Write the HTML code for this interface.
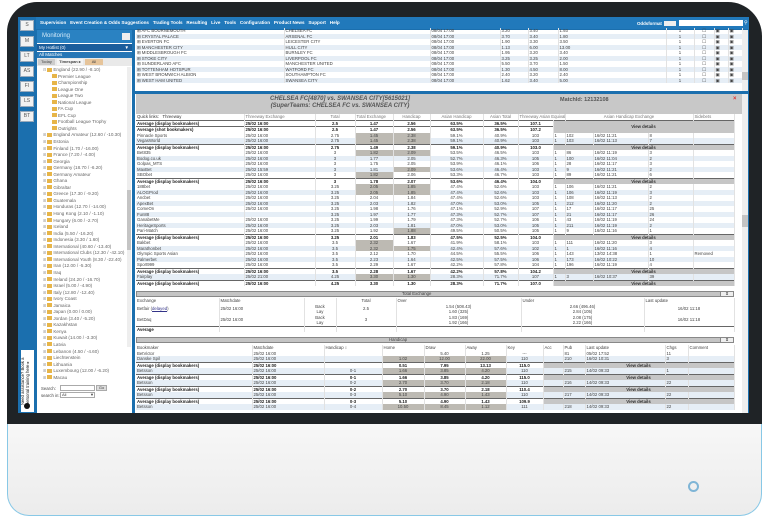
<!DOCTYPE html>
<html><head><meta charset="utf-8">
<style>
*{margin:0;padding:0;box-sizing:border-box}
body{width:768px;height:519px;background:#fff;position:relative;overflow:hidden;font-family:"Liberation Sans",sans-serif;color:#444}
.abs{position:absolute}
#bezel{left:7px;top:2px;width:755px;height:426px;background:#1f2326;border-radius:30px 34px 0 0}
#chin{left:7px;top:424px;width:755px;height:92px;background:linear-gradient(#f7f7f7,#ececec);border:1px solid #88c8e6;border-top:none;border-radius:0 0 22px 22px}
#pwr{left:688px;top:481px;width:11px;height:11px;border-radius:50%;border:2px solid #7fb5d6}
#screen{left:18px;top:17px;width:731px;height:396px;background:#1b6fae}
#menu{left:36px;top:17px;width:713px;height:12px;background:#2179bb;color:#fff;font-size:4.6px;font-weight:bold;line-height:12px;padding-left:4px;white-space:nowrap}
.side{left:20px;width:14px;height:11px;background:#f2f2f2;border:1px solid #9ab;font-size:5px;line-height:9px;text-align:center;color:#555}
#lp{left:37px;top:30px;width:95px;height:383px;background:#fff}
#main{left:135px;top:30px;width:613px;height:383px;background:#fff}
table{border-collapse:collapse;table-layout:fixed}
td{font-size:4.3px;white-space:nowrap;overflow:hidden;padding:0 1px;line-height:5.5px;height:5.5px}
.tr td{border-right:1px solid #e2e2e2}
.b td{font-weight:bold;color:#222;border-top:1px solid #666}
.alt td{background:#e6eef6}
td.g{background:#bdbab3 !important}
td.vd{background:#c6c6c6 !important;text-align:center;font-weight:bold;color:#333}
.c{text-align:center}
.tree div{font-size:4.6px;line-height:6.55px;height:6.55px;white-space:nowrap;color:#666}
.tree i{display:inline-block;width:5px;height:4px;background:#e7b548;margin-right:1px;vertical-align:-0.5px}
.tree .p{color:#999;font-size:4px;margin-right:1px}
</style></head><body>
<div class="abs" id="bezel"></div>
<div class="abs" id="chin"></div>
<div class="abs" id="pwr"></div>
<div class="abs" id="screen"></div>
<div class="abs" id="menu">Supervision&nbsp;&nbsp; Event Creation &amp; Odds Suggestions&nbsp;&nbsp; Trading Tools&nbsp;&nbsp; Resulting&nbsp;&nbsp; Live&nbsp;&nbsp; Tools&nbsp;&nbsp; Configuration&nbsp;&nbsp; Product News&nbsp;&nbsp; Support&nbsp;&nbsp; Help</div>
<div class="abs" style="left:637px;top:21px;font-size:4.4px;color:#fff;font-weight:bold">Oddsformat</div>
<div class="abs" style="left:664px;top:21px;width:12px;height:5px;background:#eee"></div>
<div class="abs" style="left:679px;top:20px;width:64px;height:6px;background:#fff"></div>
<div class="abs" style="left:744px;top:20px;font-size:5px;color:#fff">⚲</div>

<div class="abs side" style="top:20px">S</div>
<div class="abs side" style="top:36px">M</div>
<div class="abs side" style="top:51px">LT</div>
<div class="abs side" style="top:66px">AS</div>
<div class="abs side" style="top:81px">FI</div>
<div class="abs side" style="top:96px">LS</div>
<div class="abs side" style="top:111px">BT</div>
<div class="abs" style="left:21px;top:350px;width:13px;height:62px;background:#fff"></div>
<div class="abs" style="left:21px;top:412px;width:62px;height:13px;transform:rotate(-90deg);transform-origin:0 0;font-size:4.2px;line-height:4.6px;color:#111;padding-left:7px">Need assistance? Book a<br>personal training here ▸</div>
<div class="abs" style="left:24px;top:403px;width:6px;height:6px;border-radius:50%;background:#111"></div>

<!-- left panel -->
<div class="abs" id="lp"></div>
<div class="abs" style="left:37px;top:30px;width:95px;height:13px;background:#2a82c2;color:#d6ecfa;font-size:6px;line-height:13px;padding-left:5px">Monitoring</div>
<div class="abs" style="left:122px;top:33px;width:8px;height:7px;background:#eee"></div>
<div class="abs" style="left:37px;top:44px;width:95px;height:7px;background:#1a5d9c;color:#fff;font-size:4.5px;line-height:7px;padding-left:2px">My Hotlist (0)<span style="float:right;margin-right:3px">▼</span></div>
<div class="abs" style="left:37px;top:52px;width:95px;height:6px;background:#2676b6;color:#fff;font-size:4.5px;line-height:6px;padding-left:2px">All Matches</div>
<div class="abs" style="left:37px;top:58px;width:95px;height:8px;background:#e9e9e9"></div>
<div class="abs" style="left:38px;top:59px;width:17px;height:6px;background:#ccc;font-size:4px;line-height:6px;text-align:center">Today</div>
<div class="abs" style="left:57px;top:59px;width:26px;height:6px;background:#f4f4f4;font-size:4px;line-height:6px;text-align:center;font-weight:bold">Timespan ▸</div>
<div class="abs" style="left:85px;top:59px;width:18px;height:6px;background:#e6c49a;font-size:4px;line-height:6px;text-align:center">All</div>
<div class="abs" style="left:127px;top:67px;width:4px;height:280px;background:#eee"></div>
<div class="abs" style="left:127px;top:190px;width:4px;height:60px;background:#c4c4c4"></div>
<div class="abs tree" style="left:43px;top:67px;width:84px">
<div><span class="p">⊟</span><i></i>England (22.90 / -8.10)</div>
<div style="padding-left:9px"><i></i>Premier League</div>
<div style="padding-left:9px"><i></i>Championship</div>
<div style="padding-left:9px"><i></i>League One</div>
<div style="padding-left:9px"><i></i>League Two</div>
<div style="padding-left:9px"><i></i>National League</div>
<div style="padding-left:9px"><i></i>FA Cup</div>
<div style="padding-left:9px"><i></i>EFL Cup</div>
<div style="padding-left:9px"><i></i>Football League Trophy</div>
<div style="padding-left:9px"><i></i>Outrights</div>
<div><span class="p">⊞</span><i></i>England Amateur (12.60 / -10.30)</div>
<div><span class="p">⊞</span><i></i>Estonia</div>
<div><span class="p">⊞</span><i></i>Finland (1.70 / -16.00)</div>
<div><span class="p">⊞</span><i></i>France (7.20 / -4.00)</div>
<div><span class="p">⊞</span><i></i>Georgia</div>
<div><span class="p">⊞</span><i></i>Germany (18.70 / -6.20)</div>
<div><span class="p">⊞</span><i></i>Germany Amateur</div>
<div><span class="p">⊞</span><i></i>Ghana</div>
<div><span class="p">⊞</span><i></i>Gibraltar</div>
<div><span class="p">⊞</span><i></i>Greece (17.30 / -9.20)</div>
<div><span class="p">⊞</span><i></i>Guatemala</div>
<div><span class="p">⊞</span><i></i>Honduras (12.70 / -14.00)</div>
<div><span class="p">⊞</span><i></i>Hong Kong (2.10 / -1.10)</div>
<div><span class="p">⊞</span><i></i>Hungary (6.00 / -2.70)</div>
<div><span class="p">⊞</span><i></i>Iceland</div>
<div><span class="p">⊞</span><i></i>India (5.50 / -16.20)</div>
<div><span class="p">⊞</span><i></i>Indonesia (3.30 / 1.60)</div>
<div><span class="p">⊞</span><i></i>International (40.60 / -13.40)</div>
<div><span class="p">⊞</span><i></i>International Clubs (12.30 / -42.10)</div>
<div><span class="p">⊞</span><i></i>International Youth (8.30 / -22.40)</div>
<div><span class="p">⊞</span><i></i>Iran (12.00 / -5.30)</div>
<div><span class="p">⊞</span><i></i>Iraq</div>
<div><span class="p">⊞</span><i></i>Ireland (24.20 / -16.70)</div>
<div><span class="p">⊞</span><i></i>Israel (5.00 / -4.90)</div>
<div><span class="p">⊞</span><i></i>Italy (12.80 / -12.40)</div>
<div><span class="p">⊞</span><i></i>Ivory Coast</div>
<div><span class="p">⊞</span><i></i>Jamaica</div>
<div><span class="p">⊞</span><i></i>Japan (0.00 / 0.00)</div>
<div><span class="p">⊞</span><i></i>Jordan (3.40 / -5.20)</div>
<div><span class="p">⊞</span><i></i>Kazakhstan</div>
<div><span class="p">⊞</span><i></i>Kenya</div>
<div><span class="p">⊞</span><i></i>Kuwait (14.00 / -3.30)</div>
<div><span class="p">⊞</span><i></i>Latvia</div>
<div><span class="p">⊞</span><i></i>Lebanon (4.50 / -4.60)</div>
<div><span class="p">⊞</span><i></i>Liechtenstein</div>
<div><span class="p">⊞</span><i></i>Lithuania</div>
<div><span class="p">⊞</span><i></i>Luxembourg (12.00 / -6.20)</div>
<div><span class="p">⊞</span><i></i>Macau</div>
</div>
<div class="abs" style="left:41px;top:386px;font-size:4.3px">Search:</div>
<div class="abs" style="left:60px;top:385px;width:35px;height:6px;border:1px solid #aaa"></div>
<div class="abs" style="left:96px;top:385px;width:11px;height:6px;background:#ddd;border:1px solid #aaa;font-size:4px;text-align:center;line-height:4px">Go</div>
<div class="abs" style="left:41px;top:393px;font-size:4.3px">search in:</div>
<div class="abs" style="left:60px;top:392px;width:35px;height:6px;border:1px solid #aaa;font-size:4px;line-height:4px;padding-left:1px">All<span style="float:right">▼</span></div>

<!-- main -->
<div class="abs" id="main"></div>
<table class="abs" style="left:136px;top:28px;width:606px">
<colgroup><col style="width:148px"><col style="width:146px"><col style="width:70px"><col style="width:28px"><col style="width:30px"><col style="width:108px"><col style="width:28px"><col style="width:20px"><col style="width:14px"><col style="width:14px"></colgroup>
<tbody class="tr">
<tr><td>⊞ AFC BOURNEMOUTH</td><td>CHELSEA FC</td><td>08/04 17:00</td><td>3.20</td><td>3.40</td><td>1.93</td><td class="c">1</td><td class="c">☐</td><td>▣</td><td>▣</td></tr>
<tr class="alt"><td>⊞ CRYSTAL PALACE</td><td>ARSENAL FC</td><td>08/04 17:00</td><td>3.70</td><td>3.40</td><td>1.80</td><td class="c">1</td><td class="c">☐</td><td>▣</td><td>▣</td></tr>
<tr><td>⊞ EVERTON FC</td><td>LEICESTER CITY</td><td>08/04 17:00</td><td>1.90</td><td>3.30</td><td>3.50</td><td class="c">1</td><td class="c">☐</td><td>▣</td><td>▣</td></tr>
<tr class="alt"><td>⊞ MANCHESTER CITY</td><td>HULL CITY</td><td>08/04 17:00</td><td>1.13</td><td>6.00</td><td>13.00</td><td class="c">1</td><td class="c">☐</td><td>▣</td><td>▣</td></tr>
<tr><td>⊞ MIDDLESBROUGH FC</td><td>BURNLEY FC</td><td>08/04 17:00</td><td>1.95</td><td>3.20</td><td>3.40</td><td class="c">1</td><td class="c">☐</td><td>▣</td><td>▣</td></tr>
<tr class="alt"><td>⊞ STOKE CITY</td><td>LIVERPOOL FC</td><td>08/04 17:00</td><td>3.25</td><td>3.25</td><td>2.00</td><td class="c">1</td><td class="c">☐</td><td>▣</td><td>▣</td></tr>
<tr><td>⊞ SUNDERLAND AFC</td><td>MANCHESTER UNITED</td><td>08/04 17:00</td><td>5.50</td><td>3.70</td><td>1.50</td><td class="c">1</td><td class="c">☐</td><td>▣</td><td>▣</td></tr>
<tr class="alt"><td>⊞ TOTTENHAM HOTSPUR</td><td>WATFORD FC</td><td>08/04 17:00</td><td>1.30</td><td>4.50</td><td>8.00</td><td class="c">1</td><td class="c">☐</td><td>▣</td><td>▣</td></tr>
<tr><td>⊞ WEST BROMWICH ALBION</td><td>SOUTHAMPTON FC</td><td>08/04 17:00</td><td>2.40</td><td>3.20</td><td>2.40</td><td class="c">1</td><td class="c">☐</td><td>▣</td><td>▣</td></tr>
<tr class="alt"><td>⊞ WEST HAM UNITED</td><td>SWANSEA CITY</td><td>08/04 17:00</td><td>1.62</td><td>3.40</td><td>5.00</td><td class="c">1</td><td class="c">☐</td><td>▣</td><td>▣</td></tr>
</tbody></table>
<div class="abs" style="left:742px;top:30px;width:6px;height:61px;background:#eee"></div>
<div class="abs" style="left:742px;top:72px;width:6px;height:8px;background:#c4c4c4"></div>
<div class="abs" style="left:135px;top:91px;width:613px;height:3px;background:#1b6fae"></div>
<div class="abs" style="left:742px;top:94px;width:6px;height:319px;background:#eee"></div>
<div class="abs" style="left:742px;top:215px;width:6px;height:12px;background:#c4c4c4"></div>
<div class="abs" style="left:136px;top:94px;width:606px;height:20px;background:#c8c8c8"></div>
<div class="abs" style="left:200px;top:96px;width:280px;text-align:center;font-size:6px;line-height:6.5px;font-style:italic;font-weight:bold;color:#555">CHELSEA FC[4870] vs. SWANSEA CITY[5615021]<br>(SuperTeams: CHELSEA FC vs. SWANSEA CITY)</div>
<div class="abs" style="left:560px;top:97px;font-size:5.5px;font-weight:bold;color:#555">MatchId: 12132108</div>
<div class="abs" style="left:733px;top:96px;font-size:6px;color:#d33;font-weight:bold">×</div>

<table class="abs" style="left:136px;top:114px;width:598px">
<colgroup><col style="width:108px"><col style="width:71px"><col style="width:40px"><col style="width:38px"><col style="width:37px"><col style="width:53px"><col style="width:35px"><col style="width:35px"><col style="width:12px"><col style="width:28px"><col style="width:55px"><col style="width:45px"><col style="width:41px"></colgroup>
<tbody class="tr">
<tr style="color:#777"><td style="color:#333">Quick links: &nbsp; Threeway</td><td>Threeway Exchange</td><td class="c">Total</td><td>Total Exchange</td><td class="c">Handicap</td><td class="c">Asian Handicap</td><td class="c">Asian Total</td><td colspan="2">Threeway Asian Equivalent</td><td colspan="3" class="c">Asian Handicap Exchange</td><td>Sidebets</td><td>Other Sources</td></tr>
<tr class="b"><td>Average (display bookmakers)</td><td>25/02 16:00</td><td class="c">2.5</td><td class="c">1.47</td><td class="c">2.56</td><td class="c">63.5%</td><td class="c">36.5%</td><td class="c">107.1</td><td colspan="5" rowspan="2" class="vd">View details</td></tr>
<tr class="b"><td>Average (shot bookmakers)</td><td>25/02 16:00</td><td class="c">2.5</td><td class="c">1.47</td><td class="c">2.56</td><td class="c">63.5%</td><td class="c">36.5%</td><td class="c">107.2</td></tr>
<tr><td>Pinnacle Sports</td><td>25/02 16:00</td><td class="c">2.75</td><td class="c g">1.45</td><td class="c g">2.38</td><td class="c">59.1%</td><td class="c">40.9%</td><td class="c">103</td><td>1</td><td>102</td><td>16/02 11:21</td><td>8</td><td></td></tr>
<tr class="alt"><td>VegasWorld</td><td>25/02 16:00</td><td class="c">2.75</td><td class="c g">1.45</td><td class="c g">2.38</td><td class="c">59.1%</td><td class="c">40.9%</td><td class="c">103</td><td>1</td><td>103</td><td>16/02 11:13</td><td>7</td><td></td></tr>
<tr class="b"><td>Average (display bookmakers)</td><td>25/02 16:00</td><td class="c">2.75</td><td class="c">1.49</td><td class="c">2.38</td><td class="c">59.1%</td><td class="c">40.9%</td><td class="c">103.0</td><td colspan="5" class="vd">View details</td></tr>
<tr><td>Bet835</td><td>25/02 16:00</td><td class="c">3</td><td class="c g">1.82</td><td class="c g">2.09</td><td class="c">53.5%</td><td class="c">46.5%</td><td class="c">103</td><td>1</td><td>86</td><td>16/02 11:19</td><td>3</td><td></td></tr>
<tr class="alt"><td>Bodog.co.uk</td><td>25/02 16:00</td><td class="c">3</td><td class="c">1.77</td><td class="c">2.05</td><td class="c">52.7%</td><td class="c">46.3%</td><td class="c">105</td><td>1</td><td>100</td><td>16/02 11:04</td><td>2</td><td></td></tr>
<tr><td>Golpas_MTS</td><td>25/02 16:00</td><td class="c">3</td><td class="c">1.75</td><td class="c">2.05</td><td class="c">53.9%</td><td class="c">46.1%</td><td class="c">106</td><td>1</td><td>28</td><td>16/02 11:17</td><td>3</td><td></td></tr>
<tr class="alt"><td>MaxBet</td><td>25/02 15:59</td><td class="c">3</td><td class="c">1.81</td><td class="c g">2.09</td><td class="c">53.6%</td><td class="c">46.4%</td><td class="c">103</td><td>1</td><td>9</td><td>16/02 11:21</td><td>2</td><td></td></tr>
<tr><td>SBObet</td><td>25/02 16:00</td><td class="c">3</td><td class="c g">1.82</td><td class="c">2.06</td><td class="c">53.3%</td><td class="c">46.7%</td><td class="c">103</td><td>1</td><td>89</td><td>16/02 11:21</td><td>6</td><td></td></tr>
<tr class="b"><td>Average (display bookmakers)</td><td>25/02 16:00</td><td class="c">3</td><td class="c">1.78</td><td class="c">2.07</td><td class="c">53.6%</td><td class="c">46.4%</td><td class="c">104.0</td><td colspan="5" class="vd">View details</td></tr>
<tr><td>188bet</td><td>25/02 16:00</td><td class="c">3.25</td><td class="c g">2.05</td><td class="c g">1.85</td><td class="c">47.4%</td><td class="c">52.6%</td><td class="c">103</td><td>1</td><td>106</td><td>16/02 11:21</td><td>2</td><td></td></tr>
<tr class="alt"><td>ALOGProd</td><td>25/02 16:00</td><td class="c">3.25</td><td class="c g">2.05</td><td class="c g">1.85</td><td class="c">47.4%</td><td class="c">52.6%</td><td class="c">103</td><td>1</td><td>106</td><td>16/02 11:19</td><td>3</td><td></td></tr>
<tr><td>Ancbet</td><td>25/02 16:00</td><td class="c">3.25</td><td class="c">2.04</td><td class="c">1.84</td><td class="c">47.4%</td><td class="c">52.6%</td><td class="c">103</td><td>1</td><td>108</td><td>16/02 11:13</td><td>2</td><td></td></tr>
<tr class="alt"><td>ApexBet</td><td>25/02 16:00</td><td class="c">3.25</td><td class="c">2.03</td><td class="c">1.82</td><td class="c">47.0%</td><td class="c">53.0%</td><td class="c">105</td><td>1</td><td>212</td><td>16/02 11:20</td><td>2</td><td></td></tr>
<tr><td>ComeOn</td><td>25/02 16:00</td><td class="c">3.25</td><td class="c">1.98</td><td class="c">1.76</td><td class="c">47.1%</td><td class="c">52.9%</td><td class="c">107</td><td>1</td><td>17</td><td>16/02 11:17</td><td>25</td><td></td></tr>
<tr class="alt"><td>Fun88</td><td></td><td class="c">3.25</td><td class="c">1.97</td><td class="c">1.77</td><td class="c">47.3%</td><td class="c">52.7%</td><td class="c">107</td><td>1</td><td>21</td><td>16/02 11:17</td><td>26</td><td></td></tr>
<tr><td>GanabetMe</td><td>25/02 16:00</td><td class="c">3.25</td><td class="c">1.99</td><td class="c">1.79</td><td class="c">47.3%</td><td class="c">52.7%</td><td class="c">106</td><td>1</td><td>43</td><td>16/02 11:19</td><td>24</td><td></td></tr>
<tr class="alt"><td>HeritageSports</td><td>25/02 16:00</td><td class="c">3.25</td><td class="c">2.03</td><td class="c">1.81</td><td class="c">47.0%</td><td class="c">53.0%</td><td class="c">105</td><td>1</td><td>211</td><td>16/02 11:19</td><td>2</td><td></td></tr>
<tr><td>Pari-Match</td><td>25/02 16:00</td><td class="c">3.25</td><td class="c">1.92</td><td class="c g">1.88</td><td class="c">49.5%</td><td class="c">50.5%</td><td class="c">105</td><td>1</td><td>9</td><td>16/02 11:16</td><td>1</td><td></td></tr>
<tr class="b"><td>Average (display bookmakers)</td><td>25/02 16:00</td><td class="c">3.25</td><td class="c">2.01</td><td class="c">1.83</td><td class="c">47.5%</td><td class="c">52.5%</td><td class="c">104.0</td><td colspan="5" class="vd">View details</td></tr>
<tr><td>Bakbet</td><td>25/02 16:00</td><td class="c">3.5</td><td class="c g">2.32</td><td class="c">1.67</td><td class="c">41.9%</td><td class="c">58.1%</td><td class="c">103</td><td>1</td><td>111</td><td>16/02 11:20</td><td>3</td><td></td></tr>
<tr class="alt"><td>Marathonbet</td><td>25/02 16:00</td><td class="c">3.5</td><td class="c g">2.32</td><td class="c g">1.75</td><td class="c">42.4%</td><td class="c">57.6%</td><td class="c">102</td><td>1</td><td>1</td><td>16/02 11:16</td><td>4</td><td></td></tr>
<tr><td>Olympic Sports Asian</td><td>25/02 16:00</td><td class="c">3.5</td><td class="c">2.12</td><td class="c">1.70</td><td class="c">44.5%</td><td class="c">55.5%</td><td class="c">106</td><td>1</td><td>143</td><td>13/02 14:38</td><td>1</td><td>Removed</td></tr>
<tr class="alt"><td>Palmerbet</td><td>25/02 16:00</td><td class="c">3.5</td><td class="c">2.23</td><td class="c">1.64</td><td class="c">42.5%</td><td class="c">57.5%</td><td class="c">106</td><td>1</td><td>173</td><td>16/02 10:22</td><td>10</td><td></td></tr>
<tr><td>Sport999</td><td>25/02 16:00</td><td class="c">3.5</td><td class="c">2.29</td><td class="c">1.67</td><td class="c">42.2%</td><td class="c">57.8%</td><td class="c">104</td><td>1</td><td>196</td><td>16/02 11:19</td><td>4</td><td></td></tr>
<tr class="b"><td>Average (display bookmakers)</td><td>25/02 16:00</td><td class="c">3.5</td><td class="c">2.28</td><td class="c">1.67</td><td class="c">42.2%</td><td class="c">57.8%</td><td class="c">104.2</td><td colspan="5" class="vd">View details</td></tr>
<tr class="alt"><td>Fairplay</td><td>25/02 21:00</td><td class="c">4.25</td><td class="c g">3.30</td><td class="c g">1.30</td><td class="c">28.3%</td><td class="c">71.7%</td><td class="c">107</td><td>1</td><td>3</td><td>16/02 10:37</td><td>39</td><td></td></tr>
<tr class="b"><td>Average (display bookmakers)</td><td>25/02 16:00</td><td class="c">4.25</td><td class="c">3.30</td><td class="c">1.30</td><td class="c">28.3%</td><td class="c">71.7%</td><td class="c">107.0</td><td colspan="5" class="vd">View details</td></tr>
</tbody></table>

<!-- total exchange -->
<div class="abs" style="left:136px;top:291px;width:598px;height:6px;background:#c4c4c4;border:1px solid #888;font-size:4.3px;line-height:4px;padding-left:265px">Total Exchange</div>
<div class="abs" style="left:720px;top:291px;width:14px;height:6px;background:#eee;border:1px solid #888;font-size:4px;line-height:4px;text-align:center">⧗</div>
<table class="abs" style="left:136px;top:298px;width:598px">
<colgroup><col style="width:83px"><col style="width:85px"><col style="width:32px"><col style="width:60px"><col style="width:125px"><col style="width:123px"><col style="width:90px"></colgroup>
<tbody class="tr">
<tr><td>Exchange</td><td>Matchdate</td><td></td><td class="c">Total</td><td>Over</td><td>Under</td><td>Last update</td></tr>
<tr><td rowspan="2">Betfair (<u style="color:#338">delayed</u>)</td><td rowspan="2">25/02 16:00</td><td class="c">Back</td><td rowspan="2" class="c">2.5</td><td class="c">1.54 (508.43)</td><td class="c">2.66 (496.46)</td><td rowspan="2" class="c">16/02 11:18</td></tr>
<tr><td class="c">Lay</td><td class="c">1.60 (325)</td><td class="c">2.84 (105)</td></tr>
<tr><td rowspan="2">BetDaq</td><td rowspan="2">25/02 16:00</td><td class="c">Back</td><td rowspan="2" class="c">3</td><td class="c">1.83 (169)</td><td class="c">2.08 (175)</td><td rowspan="2" class="c">16/02 11:18</td></tr>
<tr><td class="c">Lay</td><td class="c">1.92 (166)</td><td class="c">2.22 (166)</td></tr>
<tr class="b"><td>Average</td><td></td><td></td><td></td><td></td><td></td><td></td></tr>
</tbody></table>

<!-- handicap -->
<div class="abs" style="left:136px;top:337px;width:598px;height:6px;background:#c4c4c4;border:1px solid #888;font-size:4.3px;line-height:4px;padding-left:252px">Handicap</div>
<div class="abs" style="left:720px;top:337px;width:14px;height:6px;background:#eee;border:1px solid #888;font-size:4px;line-height:4px;text-align:center">⧗</div>
<table class="abs" style="left:136px;top:345px;width:598px">
<colgroup><col style="width:116px"><col style="width:72px"><col style="width:58px"><col style="width:42px"><col style="width:41px"><col style="width:41px"><col style="width:37px"><col style="width:20px"><col style="width:22px"><col style="width:80px"><col style="width:23px"><col style="width:46px"></colgroup>
<tbody class="tr">
<tr><td>Bookmaker</td><td>Matchdate</td><td>Handicap ↕</td><td>Home</td><td>Draw</td><td>Away</td><td>Key</td><td>Acc</td><td>Pub</td><td>Last update</td><td>Chgs</td><td>Comment</td></tr>
<tr><td>BetVictor</td><td>25/02 16:00</td><td></td><td></td><td class="c">5.40</td><td class="c">1.25</td><td class="c">---</td><td></td><td>81</td><td>05/02 17:52</td><td>11</td><td></td></tr>
<tr class="alt"><td>Danske Spil</td><td>25/02 16:00</td><td></td><td class="c g">1.02</td><td class="c g">12.00</td><td class="c g">22.00</td><td class="c">110</td><td></td><td>210</td><td>16/02 10:31</td><td>3</td><td></td></tr>
<tr class="b"><td>Average (display bookmakers)</td><td>25/02 16:00</td><td></td><td class="c">0.51</td><td class="c">7.95</td><td class="c">13.13</td><td class="c">115.0</td><td colspan="5" class="vd">View details</td></tr>
<tr class="alt"><td>Betsson</td><td>25/02 16:00</td><td class="c">0-1</td><td class="c g">1.66</td><td class="c g">3.85</td><td class="c g">4.20</td><td class="c">110</td><td></td><td>215</td><td>14/02 09:33</td><td>1</td><td></td></tr>
<tr class="b"><td>Average (display bookmakers)</td><td>25/02 16:00</td><td class="c">0-1</td><td class="c">1.66</td><td class="c">3.85</td><td class="c">4.20</td><td class="c">115.0</td><td colspan="5" class="vd">View details</td></tr>
<tr class="alt"><td>Betsson</td><td>25/02 16:00</td><td class="c">0-2</td><td class="c g">2.70</td><td class="c g">3.70</td><td class="c g">2.18</td><td class="c">110</td><td></td><td>216</td><td>14/02 09:33</td><td>22</td><td></td></tr>
<tr class="b"><td>Average (display bookmakers)</td><td>25/02 16:00</td><td class="c">0-2</td><td class="c">2.70</td><td class="c">3.70</td><td class="c">2.18</td><td class="c">110.4</td><td colspan="5" class="vd">View details</td></tr>
<tr class="alt"><td>Betsson</td><td>25/02 16:00</td><td class="c">0-3</td><td class="c g">5.10</td><td class="c g">4.90</td><td class="c g">1.43</td><td class="c">110</td><td></td><td>217</td><td>14/02 09:33</td><td>22</td><td></td></tr>
<tr class="b"><td>Average (display bookmakers)</td><td>25/02 16:00</td><td class="c">0-3</td><td class="c">5.10</td><td class="c">4.90</td><td class="c">1.43</td><td class="c">109.9</td><td colspan="5" class="vd">View details</td></tr>
<tr class="alt"><td>Betsson</td><td>25/02 16:00</td><td class="c">0-4</td><td class="c g">10.50</td><td class="c g">8.45</td><td class="c g">1.12</td><td class="c">111</td><td></td><td>218</td><td>14/02 09:33</td><td>22</td><td></td></tr>
</tbody></table>
<div class="abs" style="left:0;top:413px;width:768px;height:0"></div>
<div class="abs" style="left:18px;top:413px;width:731px;height:11px;background:#1f2326"></div>
</body></html>
